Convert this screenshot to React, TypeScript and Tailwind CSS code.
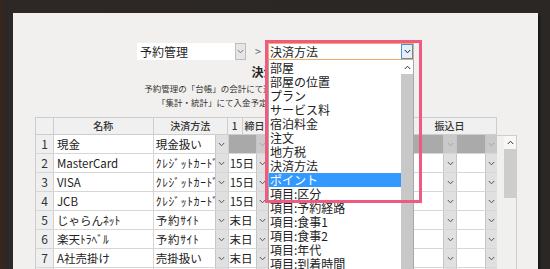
import React from "react";

const Chevron = ({ up = false, color = "#555" }: { up?: boolean; color?: string }) => (
  <svg width="7" height="5" viewBox="0 0 7 5" className={up ? "rotate-180" : ""}>
    <path d="M0.8 1 L3.5 3.8 L6.2 1" fill="none" stroke={color} strokeWidth="1" />
  </svg>
);

const Btn = ({ w, off = false }: { w: string; off?: boolean }) => (
  <div
    className={`${w} h-full flex items-center justify-center border-l border-[#c6c6c6] ${
      off ? "bg-[#c9c9c9]" : "bg-[#e0e0e0]"
    }`}
  >
    <Chevron color={off ? "#a5a5a5" : "#555"} />
  </div>
);

const rows = [
  { no: 1, name: "現金", pay: "現金扱い", half: false, day: "", off: true },
  { no: 2, name: "MasterCard", pay: "ｸﾚｼﾞｯﾄｶｰﾄﾞ", half: true, day: "15日", off: false },
  { no: 3, name: "VISA", pay: "ｸﾚｼﾞｯﾄｶｰﾄﾞ", half: true, day: "15日", off: false },
  { no: 4, name: "JCB", pay: "ｸﾚｼﾞｯﾄｶｰﾄﾞ", half: true, day: "15日", off: false },
  { no: 5, name: "じゃらんﾈｯﾄ", pay: "予約ｻｲﾄ", half: true, day: "末日", off: false },
  { no: 6, name: "楽天ﾄﾗﾍﾞﾙ", pay: "予約ｻｲﾄ", half: true, day: "末日", off: false },
  { no: 7, name: "A社売掛け", pay: "売掛扱い", half: false, day: "末日", off: false },
  { no: 8, name: "", pay: "", half: false, day: "", off: false },
];

const options = [
  "部屋",
  "部屋の位置",
  "プラン",
  "サービス料",
  "宿泊料金",
  "注文",
  "地方税",
  "決済方法",
  "ポイント",
  "項目:区分",
  "項目:予約経路",
  "項目:食事1",
  "項目:食事2",
  "項目:年代",
  "項目:到着時間",
  "項目:出発時間",
];

export default function App() {
  return (
    <div className="w-[550px] h-[269px] overflow-hidden pl-[13px] pt-[13px] bg-[linear-gradient(90deg,#3a2619_0px,#2d2826_5px,#2b2725_100%)] font-['Noto_Sans_CJK_JP','Noto_Sans',sans-serif] text-[#222]">
      <div className="relative w-[525px] h-[300px] bg-[#f1f0ee] shadow-[2px_2px_2px_rgba(0,0,0,0.45)] pt-[30px]">
        {/* top selects */}
        <div className="flex items-center h-[17px] pl-[124px]">
          <div className="w-[109px] h-[17px] flex bg-white">
            <div className="flex-1 text-[12px] leading-[17px] pl-[3px]">予約管理</div>
            <div className="w-[11px] h-full bg-[#e6e6e6] border border-[#bdbdbd] flex items-center justify-center">
              <Chevron color="#777" />
            </div>
          </div>
          <div className="ml-[9px] text-[11px] text-[#666] leading-none">&gt;</div>
          <div className="ml-[7px] w-[146px] h-[17px] flex bg-white border border-[#f2a968]">
            <div className="flex-1 text-[12px] leading-[15px] pl-[1px]">決済方法</div>
            <div className="w-[12px] h-full bg-[#e3f0fb] border border-[#4d90c8] flex items-center justify-center">
              <Chevron color="#222" />
            </div>
          </div>
        </div>

        {/* title + description */}
        <div className="mt-[4px] text-center text-[12px] leading-[16px] font-bold">決済方法</div>
        <div className="mt-[1px] text-center text-[8.5px] leading-[14px] text-[#333]">
          <p>予約管理の「台帳」の会計にて選択できる決済方法の設定をします。</p>
          <p>「集計・統計」にて入金予定日や振込予定の確認ができます。</p>
        </div>

        {/* table */}
        <div className="ml-[22px] mt-[8px] flex flex-col">
          <div className="flex w-[462px] h-[18px] bg-[#f0f0f0] border-y border-l border-[#cdcdcd] text-[10px] font-medium text-[#333] leading-[16px]">
            <div className="w-[18px] border-r border-[#cdcdcd]" />
            <div className="w-[100px] border-r border-[#cdcdcd] text-center">名称</div>
            <div className="w-[74px] border-r border-[#cdcdcd] text-center">決済方法</div>
            <div className="w-[15px] border-r border-[#cdcdcd] text-center">1</div>
            <div className="w-[40px] border-r border-[#cdcdcd] pl-[2px]">締日</div>
            <div className="w-[121px] border-r border-[#cdcdcd] text-center">入金日</div>
            <div className="w-[94px] border-r border-[#cdcdcd] text-center">振込日</div>
          </div>
          <div className="flex">
            <div className="w-[462px] flex flex-col border-l border-[#cdcdcd]">
              {rows.map((r) => (
                <div key={r.no} className="flex h-[19px] border-b border-[#d6d6d6] text-[11.5px] leading-[18px]">
                  <div className="w-[18px] bg-[#efefef] border-r border-[#d0d0d0] text-center text-[12px] text-[#333]">{r.no}</div>
                  <div className="w-[100px] bg-white border-r border-[#d6d6d6] pl-[3px] whitespace-nowrap">{r.name}</div>
                  <div className={`w-[61px] bg-white pl-[2px] whitespace-nowrap ${r.half ? "tracking-[0.7px]" : ""}`}>
                    {r.pay}
                  </div>
                  <Btn w="w-[13px]" />
                  <div
                    className={`w-[28px] pl-[1px] whitespace-nowrap border-l border-[#d0d0d0] ${
                      r.off ? "bg-[#a9a9a9]" : "bg-white"
                    }`}
                  >
                    {r.day}
                  </div>
                  <Btn w="w-[12px]" off={r.off} />
                  <div className={`w-[147px] ${r.off ? "bg-[#a9a9a9]" : "bg-white"}`} />
                  <div className={`w-[29px] ${r.off ? "bg-[#aaaaaa]" : "bg-white"}`} />
                  <Btn w="w-[13px]" off={r.off} />
                  <div className={`w-[29px] border-l border-[#c6c6c6] ${r.off ? "bg-[#aaaaaa]" : "bg-white"}`} />
                  <Btn w="w-[12px]" off={r.off} />
                </div>
              ))}
            </div>
            <div className="w-[20px] h-[160px] border-t border-r border-[#cdcdcd] flex justify-end">
              <div className="w-[12px] h-full bg-[#f0f0f0] flex flex-col">
                <div className="h-[13px] bg-[#f7f7f7] flex items-center justify-center">
                  <Chevron up color="#333" />
                </div>
                <div className="h-[49px] bg-[#cdcdcd]" />
              </div>
            </div>
          </div>
        </div>

        {/* open dropdown list */}
        <div className="absolute left-[255px] top-[47px] w-[146px] h-[260px] bg-white border-x border-b border-[#a8a8a8] flex">
          <div className="flex-1 flex flex-col pt-[1px]">
            {options.map((o) => (
              <div
                key={o}
                className={`h-[14px] text-[12px] leading-[14px] pl-[1px] whitespace-nowrap ${
                  o === "ポイント" ? "bg-[#3399ff] text-white" : "text-[#222]"
                }`}
              >
                {o}
              </div>
            ))}
          </div>
          <div className="w-[12px] flex flex-col bg-[#f0f0f0]">
            <div className="h-[14px] bg-white flex items-center justify-center">
              <Chevron up color="#333" />
            </div>
            <div className="flex-1 bg-[#c8c8c8]" />
          </div>
        </div>

        {/* highlight frame */}
        <div className="absolute left-[252px] top-[27px] w-[157px] h-[163px] border-[3px] border-[#ee5a80]" />
      </div>
    </div>
  );
}
